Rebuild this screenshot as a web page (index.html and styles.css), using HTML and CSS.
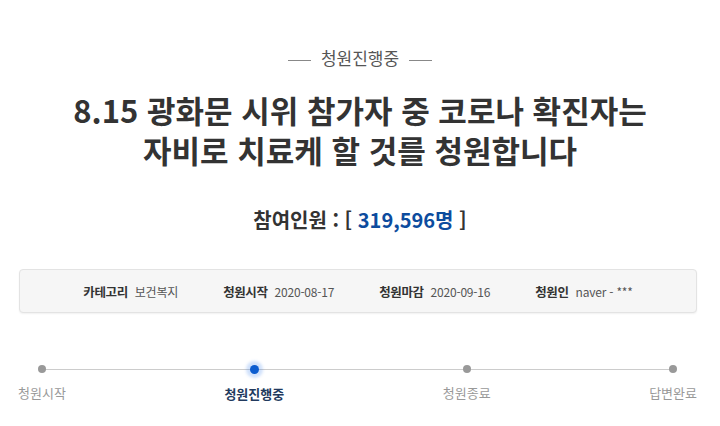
FILE: index.html
```html
<!DOCTYPE html>
<html lang="ko">
<head>
    <meta charset="UTF-8">
    <meta name="viewport" content="width=device-width, initial-scale=1.0">
    <title>청원진행중</title>
    <link rel="stylesheet" href="styles.css">
</head>
<body>

<div class="petition">
    <p class="status"><span class="status-text">청원진행중</span></p>

    <h1 class="title">8.15 광화문 시위 참가자 중 코로나 확진자는<br>자비로 치료케 할 것를 청원합니다</h1>

    <h2 class="count">참여인원 : [ <span class="count-num">319,596명</span> ]</h2>

    <!-- Petition info -->
    <ul class="info">
        <li><strong>카테고리</strong><span>보건복지</span></li>
        <li><strong>청원시작</strong><span>2020-08-17</span></li>
        <li><strong>청원마감</strong><span>2020-09-16</span></li>
        <li><strong>청원인</strong><span>naver - ***</span></li>
    </ul>

    <!-- Progress steps -->
    <ol class="steps">
        <li class="step"><i class="dot"></i><span>청원시작</span></li>
        <li class="step active"><i class="dot"></i><span>청원진행중</span></li>
        <li class="step"><i class="dot"></i><span>청원종료</span></li>
        <li class="step"><i class="dot"></i><span>답변완료</span></li>
    </ol>
</div>

</body>
</html>
```

FILE: styles.css
```css
body {
    font-family: "Noto Sans CJK KR", "Noto Sans", sans-serif;
    margin: 0;
    padding: 0;
    background-color: #fff;
    color: #333;
}

.petition {
    padding-top: 47px;
}

.status {
    margin: 0;
    text-align: center;
    font-size: 17px;
    line-height: 22px;
    color: #555;
}

.status-text::before,
.status-text::after {
    content: "";
    display: inline-block;
    width: 23px;
    height: 1px;
    background-color: #888;
    vertical-align: middle;
}

.status-text::before {
    margin-right: 10px;
}

.status-text::after {
    margin-left: 10px;
}

.title {
    margin: 21px 0 0;
    text-align: center;
    font-size: 31px;
    line-height: 40px;
    font-weight: bold;
    color: #333;
}

.count {
    margin: 35px 0 0;
    text-align: center;
    font-size: 20px;
    line-height: 30px;
    font-weight: bold;
    color: #333;
}

.count-num {
    color: #0d4c9e;
}

.info {
    list-style: none;
    margin: 34px 23px 0 19px;
    padding: 0;
    height: 42px;
    display: flex;
    justify-content: center;
    align-items: center;
    gap: 45px;
    background-color: #f6f6f6;
    border: 1px solid #e3e3e3;
    border-radius: 4px;
    box-shadow: 0 1px 2px rgba(0, 0, 0, 0.06);
    font-size: 12px;
}

.info li {
    display: flex;
    align-items: baseline;
    gap: 7px;
}

.info strong {
    color: #333;
    font-size: 12.5px;
    letter-spacing: -0.4px;
}

.info span {
    color: #555;
    letter-spacing: -0.2px;
}

.steps {
    list-style: none;
    margin: 46px 23px 0 18px;
    padding: 0;
    display: flex;
    justify-content: space-between;
    position: relative;
}

.steps::before {
    content: "";
    position: absolute;
    top: 10px;
    left: 22px;
    right: 23px;
    height: 1px;
    background-color: #ccc;
}

.step {
    display: flex;
    flex-direction: column;
    align-items: center;
    font-size: 13px;
    color: #999;
}

.step .dot {
    display: block;
    width: 8px;
    height: 8px;
    margin: 6px 0;
    border-radius: 50%;
    background-color: #999;
    position: relative;
}

.step span {
    margin-top: 4px;
    line-height: 20px;
}

.step.active {
    color: #223a5e;
    font-weight: bold;
}

.step.active .dot {
    width: 9px;
    height: 9px;
    background-color: #0b5ccf;
    box-shadow: 0 0 3px 4px rgba(40, 120, 235, 0.22);
}
```
